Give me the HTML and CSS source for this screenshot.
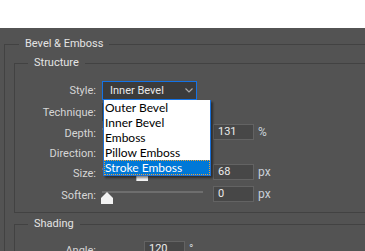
FILE: index.html
```html
<!DOCTYPE html>
<html lang="en">
<head>
    <meta charset="UTF-8">
    <meta name="viewport" content="width=device-width, initial-scale=1.0">
    <title>Layer Style - Bevel &amp; Emboss</title>
    <link rel="stylesheet" href="styles.css">
</head>
<body>
    <div class="topbar"></div>
    <div class="panel">
        <fieldset class="group">
            <legend>Bevel &amp; Emboss</legend>

            <fieldset class="sub structure">
                <legend>Structure</legend>
                <div class="form">
                    <div class="row row-style">
                        <label>Style:</label>
                        <div class="select open">
                            <span>Inner Bevel</span>
                            <svg width="8" height="5" viewBox="0 0 8 5"><path d="M0.5 0.5 L4 4 L7.5 0.5" fill="none" stroke="#a8a8a8" stroke-width="1.2"/></svg>
                        </div>
                        <ul class="menu">
                            <li>Outer Bevel</li>
                            <li>Inner Bevel</li>
                            <li>Emboss</li>
                            <li>Pillow Emboss</li>
                            <li class="active">Stroke Emboss</li>
                        </ul>
                    </div>
                    <!-- technique select and direction radios sit under the open menu -->
                    <div class="row row-tech">
                        <label>Technique:</label>
                        <div class="select"></div>
                    </div>
                    <div class="row row-depth num">
                        <label>Depth:</label>
                        <div class="slider"><span class="thumb" style="left: 13%"></span></div>
                        <div class="box">131</div>
                        <span class="unit">%</span>
                    </div>
                    <div class="row row-dir">
                        <label>Direction:</label>
                        <div class="radios"></div>
                    </div>
                    <div class="row row-size num">
                        <label>Size:</label>
                        <div class="slider"><span class="thumb" style="left: 35%"></span></div>
                        <div class="box">68</div>
                        <span class="unit">px</span>
                    </div>
                    <div class="row row-soften num">
                        <label>Soften:</label>
                        <div class="slider"><span class="thumb" style="left: 0%"></span></div>
                        <div class="box">0</div>
                        <span class="unit">px</span>
                    </div>
                </div>
            </fieldset>

            <fieldset class="sub shading">
                <legend>Shading</legend>
                <div class="form">
                    <div class="row num">
                        <label>Angle:</label>
                        <div class="dial"></div>
                        <div class="box">120</div>
                        <span class="unit">°</span>
                    </div>
                </div>
            </fieldset>
        </fieldset>
    </div>
</body>
</html>
```

FILE: styles.css
```css
body {
    margin: 0;
    overflow: hidden;
    font-family: Roboto, "Liberation Sans", sans-serif;
    font-size: 11px;
    color: #d6d6d6;
    background: #535353;
}
.topbar {
    height: 28px;
    background: #fff;
}
.panel {
    background: #535353;
    padding-top: 9px;
    height: 214px;
}
fieldset {
    margin: 0;
    padding: 0;
    border: 0;
    min-width: 0;
}
legend {
    padding: 0 6px;
    line-height: 14px;
    color: #e4e4e4;
}
.group {
    margin-left: 4px;
    padding-left: 9px;
    border-left: 1px solid #424242;
    border-top: 1px solid #424242;
}
.group > legend {
    margin-left: 5px;
}
.sub {
    border-left: 1px solid #424242;
    border-top: 1px solid #424242;
}
.sub > legend {
    margin-left: 13px;
}
.structure {
    margin-top: 5px;
    border-bottom: 1px solid #424242;
}
.shading {
    margin-top: 4px;
}
.structure .form {
    padding: 11px 0 10px;
}
.shading .form {
    padding-top: 10px;
}
.row {
    display: flex;
    align-items: center;
    position: relative;
}
.row label {
    width: 81px;
    margin-right: 6px;
    text-align: right;
}
.num label {
    padding-top: 2px;
}
.row-style { height: 19px; }
.row-tech { height: 18px; margin-top: 3px; }
.row-depth { height: 16px; margin-top: 3px; }
.row-dir { height: 20px; margin-top: 3px; }
.row-size { height: 16px; margin-top: 1px; }
.row-soften { height: 16px; margin-top: 6px; }

.select {
    box-sizing: border-box;
    width: 95px;
    height: 100%;
    display: flex;
    align-items: center;
    justify-content: space-between;
    padding: 0 3px 0 7px;
    background: #3b3b3b;
    border: 1px solid #3b3b3b;
    color: #e8e8e8;
}
.select.open {
    border-color: #1473e6;
}
.menu {
    position: absolute;
    left: 88px;
    top: 19px;
    z-index: 2;
    width: 106px;
    margin: 0;
    padding: 0;
    list-style: none;
    background: #fff;
    border: 1px solid #1a6fd6;
    border-top: 0;
    box-shadow: 2px 2px 2px rgba(0, 0, 0, 0.45);
    font-family: Lato, "Liberation Sans", sans-serif;
    font-size: 12px;
    color: #000;
}
.menu li {
    height: 15px;
    line-height: 15px;
    padding-left: 1px;
}
.menu li.active {
    background: #0078d7;
    color: #fff;
    outline: 1px dotted #e9a23b;
    outline-offset: -1px;
}
.slider {
    position: relative;
    width: 101px;
    height: 12px;
    margin-right: 10px;
    align-self: flex-end;
    border-top: 2px solid #6e6e6e;
    box-sizing: border-box;
}
.row-soften .slider {
    margin-bottom: -1px;
}
.thumb {
    position: absolute;
    top: -1px;
    margin-left: -1px;
    width: 12px;
    height: 12px;
    background: #f2f2f2;
    clip-path: polygon(50% 0, 100% 50%, 100% 100%, 0 100%, 0 50%);
}
.radios {
    width: 101px;
    margin-right: 10px;
}
.dial {
    width: 42px;
}
.box {
    box-sizing: border-box;
    width: 41px;
    height: 16px;
    line-height: 14px;
    padding-left: 4px;
    background: #474747;
    border: 1px solid #636363;
    color: #ececec;
}
.unit {
    margin-left: 4px;
    color: #c9d0d8;
    font-size: 12px;
}
```
